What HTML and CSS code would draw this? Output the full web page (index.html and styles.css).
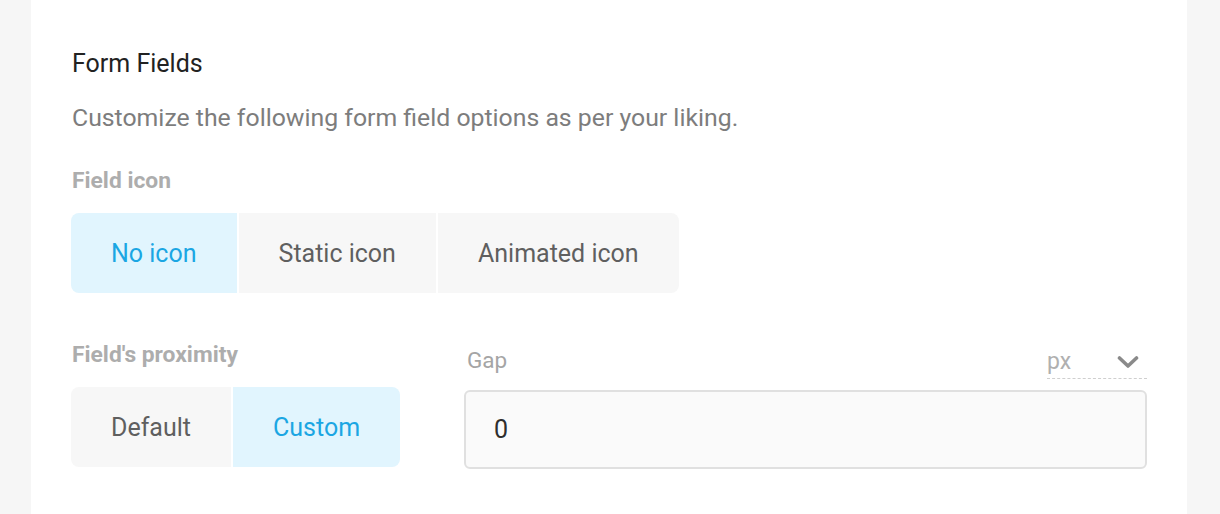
FILE: index.html
```html
<!DOCTYPE html>
<html>
<head>
<meta charset="utf-8">
<link rel="stylesheet" href="styles.css">
</head>
<body>
<div class="page">
  <section class="card">
    <h2 class="title">Form Fields</h2>
    <p class="desc">Customize the following form field options as per your liking.</p>
    <div class="label label-icon">Field icon</div>
    <div class="seg">
      <button class="seg-btn active">No icon</button>
      <button class="seg-btn">Static icon</button>
      <button class="seg-btn">Animated icon</button>
    </div>
    <div class="row">
      <div class="col-left">
        <div class="label">Field's proximity</div>
        <div class="seg">
          <button class="seg-btn">Default</button>
          <button class="seg-btn active">Custom</button>
        </div>
      </div>
      <div class="col-right">
        <div class="gap-head">
          <span class="gap-label">Gap</span>
          <span class="unit">
            <span class="unit-text">px</span>
            <svg class="chev" width="22" height="12" viewBox="0 0 22 12"><polyline points="2.5,2 11,10 19.5,2" fill="none" stroke="#8a8a8a" stroke-width="3.6" stroke-linecap="round" stroke-linejoin="round"/></svg>
          </span>
        </div>
        <div class="input">0</div>
      </div>
    </div>
  </section>
</div>
</body>
</html>
```
FILE: styles.css
```css
html, body {
  margin: 0;
  padding: 0;
}
body {
  background: #f6f6f6;
  font-family: Roboto, "Liberation Sans", sans-serif;
}
.page {
  padding: 0 33px 0 31px;
}
.card {
  background: #ffffff;
  height: 514px;
  box-sizing: border-box;
  padding: 50px 40px 0 41px;
}
.title {
  margin: 0;
  font-size: 25px;
  line-height: 28px;
  font-weight: 400;
  color: #222222;
}
.desc {
  margin: 26px 0 0 0;
  font-size: 24.8px;
  line-height: 28px;
  color: #7d7d7d;
}
.label {
  font-size: 22.8px;
  line-height: 24px;
  font-weight: 700;
  color: #adadad;
}
.label-icon {
  margin-top: 37px;
}
.seg {
  display: inline-flex;
  gap: 2px;
  margin-top: 20px;
  margin-left: -1px;
  border-radius: 8px;
  overflow: hidden;
}
.seg-btn {
  border: 0;
  margin: 0;
  height: 80px;
  padding: 0 40px;
  background: #f7f7f7;
  color: #5f5f5f;
  font-family: Roboto, "Liberation Sans", sans-serif;
  font-size: 25px;
  font-weight: 400;
}
.seg-btn.active {
  background: #e1f5fe;
  color: #1ba6e3;
}
.row {
  display: flex;
  margin-top: 50px;
}
.col-left {
  display: flex;
  flex-direction: column;
  align-items: flex-start;
  width: 392px;
}
.col-right {
  flex: 1;
  display: flex;
  flex-direction: column;
  margin-top: 2px;
}
.gap-head {
  display: flex;
  justify-content: space-between;
  align-items: flex-end;
  padding-left: 3px;
}
.gap-label {
  font-size: 22.5px;
  line-height: 30px;
  color: #a5a5a5;
  padding-bottom: 4px;
}
.unit {
  display: flex;
  align-items: center;
  justify-content: space-between;
  width: 100px;
  height: 34px;
  border-bottom: 1.5px dashed #cfcfcf;
  box-sizing: border-box;
}
.unit-text {
  font-size: 23px;
  color: #b0b0b0;
}
.chev {
  margin-right: 8px;
}
.input {
  margin-top: 11px;
  height: 79px;
  box-sizing: border-box;
  border: 2px solid #e0e0e0;
  border-radius: 6px;
  background: #fafafa;
  display: flex;
  align-items: center;
  padding-left: 28px;
  font-size: 25px;
  color: #2e2e2e;
}
```
